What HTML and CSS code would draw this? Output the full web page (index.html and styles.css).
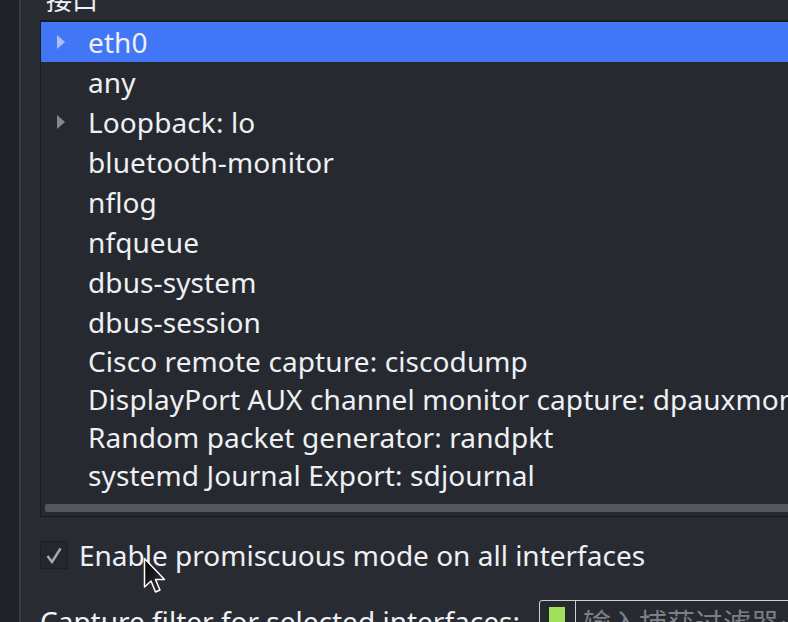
FILE: index.html
```html
<!DOCTYPE html>
<html>
<head>
<meta charset="utf-8">
<link rel="stylesheet" href="styles.css">
</head>
<body>
<div class="app">
  <div class="sidebar"></div>
  <div class="divider"></div>
  <div class="main">
    <div class="label">接口</div>
    <div class="list">
      <div class="row tall selected"><span class="exp"><span class="tri"></span></span>eth0</div>
      <div class="row tall"><span class="exp"></span>any</div>
      <div class="row tall"><span class="exp"><span class="tri"></span></span>Loopback: lo</div>
      <div class="row tall"><span class="exp"></span>bluetooth-monitor</div>
      <div class="row tall"><span class="exp"></span>nflog</div>
      <div class="row tall"><span class="exp"></span>nfqueue</div>
      <div class="row tall"><span class="exp"></span>dbus-system</div>
      <div class="row tall"><span class="exp"></span>dbus-session</div>
      <div class="row"><span class="exp"></span>Cisco remote capture: ciscodump</div>
      <div class="row"><span class="exp"></span>DisplayPort AUX channel monitor capture: dpauxmon</div>
      <div class="row"><span class="exp"></span>Random packet generator: randpkt</div>
      <div class="row"><span class="exp"></span>systemd Journal Export: sdjournal</div>
      <div class="hscroll"><div class="thumb"></div></div>
    </div>
    <div class="check-row">
      <span class="checkbox">
        <svg width="16" height="17" viewBox="0 0 16 17"><path d="M1.5 9 L6 15 L14.5 1.5" fill="none" stroke="#a9abb0" stroke-width="2.4"/></svg>
      </span>
      <span class="check-text">Enable promiscuous mode on all interfaces</span>
    </div>
    <div class="filter-row">
      <span class="filter-label">Capture filter for selected interfaces:</span>
      <div class="filter-input">
        <span class="green"></span>
        <span class="sep"></span>
        <span class="placeholder">输入捕获过滤器…</span>
      </div>
    </div>
  </div>
</div>
<svg class="cursor" width="26" height="40" viewBox="0 0 26 40">
  <defs>
    <linearGradient id="cg" x1="0" y1="0" x2="1" y2="1">
      <stop offset="0" stop-color="#000"/>
      <stop offset="1" stop-color="#3a3a3a"/>
    </linearGradient>
  </defs>
  <path d="M1.5 1.5 L1.5 30 L8 24 L12.5 35 L17 33 L12.5 22.5 L21.5 22.5 Z" fill="url(#cg)" stroke="#fff" stroke-width="1.5" stroke-linejoin="round"/>
</svg>
</body>
</html>
```

FILE: styles.css
```css
html, body {
  margin: 0;
  padding: 0;
}
body {
  width: 788px;
  height: 622px;
  overflow: hidden;
  background: #2a2c34;
  font-family: "Noto Sans", "Noto Sans CJK SC", sans-serif;
  color: #eef0f2;
  position: relative;
}
.app {
  display: flex;
  height: 622px;
}
.sidebar {
  width: 19px;
  flex: none;
  background: #212328;
}
.divider {
  width: 2px;
  flex: none;
  background: #3a3d44;
}
.main {
  flex: none;
  width: 820px;
  padding-left: 19px;
  background: #292b33;
}
.label {
  font-size: 26px;
  line-height: 20px;
  height: 20px;
  margin-top: -11px;
  margin-bottom: 11px;
  padding-left: 6px;
  font-family: "Noto Sans CJK SC", sans-serif;
}
.list {
  border: 1px solid #1b1c20;
  border-top: 2px solid #1b1c20;
  background: #272930;
  width: 780px;
}
.row {
  display: flex;
  align-items: center;
  height: 38px;
  font-size: 28px;
  line-height: 38px;
  letter-spacing: 0.1px;
  white-space: nowrap;
}
.row.tall {
  height: 40px;
}
.row.selected {
  background: #4177f6;
}
.exp {
  width: 47px;
  flex: none;
  display: flex;
  align-items: center;
  padding-left: 16px;
  box-sizing: border-box;
}
.tri {
  width: 0;
  height: 0;
  border-top: 7px solid transparent;
  border-bottom: 7px solid transparent;
  border-left: 8px solid #86888d;
}
.selected .tri {
  border-left-color: #a9c0f7;
}
.hscroll {
  padding: 10px 0 4px 4px;
}
.thumb {
  height: 8px;
  background: #55575c;
  border-radius: 2px 0 0 2px;
}
.check-row {
  display: flex;
  align-items: center;
  margin-top: 24px;
  height: 28px;
}
.checkbox {
  width: 26px;
  height: 26px;
  border: 1px solid #1d1e22;
  background: #25272d;
  display: flex;
  align-items: center;
  justify-content: center;
  flex: none;
}
.check-text {
  margin-left: 11px;
  font-size: 28px;
  white-space: nowrap;
}
.filter-row {
  display: flex;
  align-items: flex-start;
  margin-top: 31px;
}
.filter-label {
  font-size: 28px;
  line-height: 34px;
  white-space: nowrap;
  margin-top: 4px;
}
.filter-input {
  margin-left: 19px;
  width: 300px;
  height: 40px;
  border: 1px solid #cfd0d2;
  border-radius: 3px 0 0 0;
  display: flex;
  align-items: flex-start;
  background: #272930;
}
.green {
  width: 16px;
  height: 20px;
  margin: 6px 0 0 9px;
  background: #a1e05a;
  flex: none;
}
.sep {
  width: 1px;
  height: 40px;
  background: #cfd0d2;
  margin-left: 10px;
  flex: none;
}
.placeholder {
  margin-left: 7px;
  font-size: 28px;
  line-height: 34px;
  margin-top: 4px;
  color: #7d7f85;
  font-family: "Noto Sans CJK SC", sans-serif;
  white-space: nowrap;
}
.cursor {
  position: absolute;
  left: 143px;
  top: 557px;
}
```
